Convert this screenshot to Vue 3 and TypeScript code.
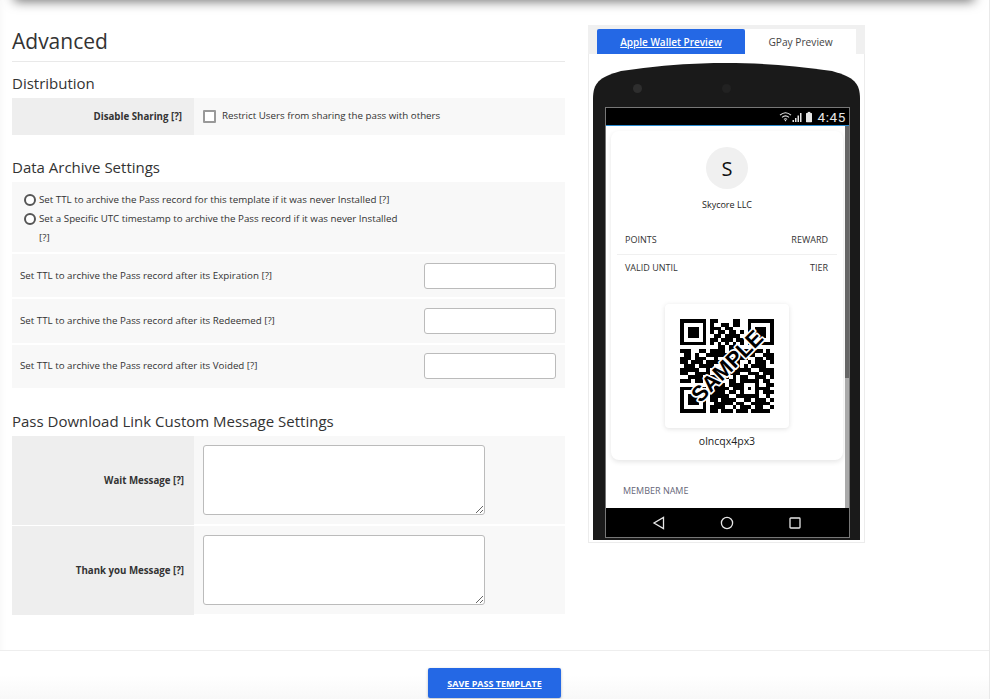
<script setup lang="ts">
import { computed } from 'vue'

const finderTop = ['1111111', '1000001', '1011101', '1011101', '1011101', '1000001', '1111111', '0000000']
const middle = ['01100001100', '01001101100', '01110110000', '01011011010', '00110111100', '01101110110', '01010101010', '00011011000']
const lower = [
  '1110011011110110011111010',
  '0110100111111001101100111',
  '1110111001001111110011011',
  '1101110111100111001011101',
  '0111011110011111010111100',
  '1111100100110011111001111',
  '1100111101001111001110111',
  '0011110011111010110011101',
  '1110110101100110111110110',
  '0000000011110111100010011',
  '1111111001111011101011110',
  '1000001011110110100010111',
  '1011101011111001111110010',
  '1011101011011110011011101',
  '1011101001111101100111110',
  '1000001011110010111011001',
  '1111111011011101110111110',
]
const rows = [...finderTop.map((f, i) => f + middle[i] + f), ...lower]

const qrPath = computed(() =>
  rows
    .flatMap((row, y) =>
      [...row].map((cell, x) => (cell === '1' ? `M${x} ${y}h1v1h-1z` : '')),
    )
    .join(''),
)

const archiveRows = [
  'Set TTL to archive the Pass record after its Expiration [?]',
  'Set TTL to archive the Pass record after its Redeemed [?]',
  'Set TTL to archive the Pass record after its Voided [?]',
]
const messageRows = ['Wait Message [?]', 'Thank you Message [?]']
</script>

<template>
  <div class="page">
    <div class="top-shadow"></div>
    <div class="content">
      <main class="left">
        <h1>Advanced</h1>

        <h2 class="h-dist">Distribution</h2>
        <div class="row share">
          <div class="label">Disable Sharing [?]</div>
          <div class="value share-value">
            <input class="check" type="checkbox" />
            <span class="share-text">Restrict Users from sharing the pass with others</span>
          </div>
        </div>

        <h2 class="h-data">Data Archive Settings</h2>
        <div class="radios">
          <label class="radio-line">
            <input class="radio" type="radio" name="ttl" />
            <span>Set TTL to archive the Pass record for this template if it was never Installed [?]</span>
          </label>
          <label class="radio-line">
            <input class="radio" type="radio" name="ttl" />
            <span>Set a Specific UTC timestamp to archive the Pass record if it was never Installed<br />[?]</span>
          </label>
        </div>
        <div class="archive-list">
          <div v-for="text in archiveRows" :key="text" class="archive-row">
            <span class="archive-text">{{ text }}</span>
            <input class="text-input" type="text" />
          </div>
        </div>

        <h2 class="h-pass">Pass Download Link Custom Message Settings</h2>
        <div class="message-list">
          <div v-for="text in messageRows" :key="text" class="row message">
            <div class="label">{{ text }}</div>
            <div class="value message-value">
              <textarea class="area"></textarea>
            </div>
          </div>
        </div>
      </main>

      <aside class="right">
        <div class="tabs">
          <a class="tab active">Apple Wallet Preview</a>
          <a class="tab">GPay Preview</a>
        </div>
        <div class="panel">
          <div class="phone">
            <div class="lens"></div>
            <div class="sensor"></div>
            <div class="screen">
              <div class="status">
                <svg class="status-icons" width="36" height="12" viewBox="0 0 36 12">
                  <g fill="none" stroke="#e6e6e6" stroke-width="1.1">
                    <path d="M1 4.2C4.6 1 8.4 1 12 4.2" />
                    <path d="M3 6.4C5.2 4.4 7.8 4.4 10 6.4" />
                    <path d="M4.9 8.4C5.9 7.6 7.1 7.6 8.1 8.4" />
                  </g>
                  <path d="M5.6 9.6L6.5 8.8L7.4 9.6L6.5 10.6Z" fill="#e6e6e6" />
                  <g fill="#e6e6e6">
                    <rect x="13.5" y="9" width="1.5" height="2" />
                    <rect x="16" y="7" width="1.5" height="4" />
                    <rect x="18.5" y="4.5" width="1.5" height="6.5" />
                    <rect x="21" y="2" width="1.5" height="9" />
                    <rect x="27" y="2" width="6" height="9.2" rx="0.6" />
                    <rect x="28.7" y="0.9" width="2.6" height="1.3" />
                  </g>
                </svg>
                <span class="clock">4:45</span>
              </div>
              <div class="scroll">
                <div class="scrollbar"></div>
                <div class="card">
                  <div class="avatar">S</div>
                  <div class="company">Skycore LLC</div>
                  <div class="field-row first">
                    <span>POINTS</span><span>REWARD</span>
                  </div>
                  <div class="field-row second">
                    <span>VALID UNTIL</span><span>TIER</span>
                  </div>
                  <div class="qr-card">
                    <svg class="qr" width="94" height="94" viewBox="0 0 25 25">
                      <path :d="qrPath" fill="#000" shape-rendering="crispEdges" />
                      <text
                        class="sample sample-halo"
                        x="12.5"
                        y="12.5"
                        text-anchor="middle"
                        dominant-baseline="central"
                        transform="rotate(-45 12.5 12.5)"
                      >SAMPLE</text>
                      <text
                        class="sample"
                        x="12.5"
                        y="12.5"
                        text-anchor="middle"
                        dominant-baseline="central"
                        transform="rotate(-45 12.5 12.5)"
                        aria-hidden="true"
                      >SAMPLE</text>
                    </svg>
                  </div>
                  <div class="code">olncqx4px3</div>
                </div>
                <div class="member">MEMBER NAME</div>
              </div>
              <div class="nav">
                <svg width="14" height="14" viewBox="0 0 14 14">
                  <path d="M11.5 1.5V12.5L2 7Z" fill="none" stroke="#e6e6e6" stroke-width="1.3" />
                </svg>
                <svg width="14" height="14" viewBox="0 0 14 14">
                  <circle cx="7" cy="7" r="5.6" fill="none" stroke="#e6e6e6" stroke-width="1.3" />
                </svg>
                <svg width="14" height="14" viewBox="0 0 14 14">
                  <rect x="2" y="2" width="10" height="10" rx="0.8" fill="none" stroke="#e6e6e6" stroke-width="1.3" />
                </svg>
              </div>
            </div>
          </div>
        </div>
      </aside>
    </div>

    <footer class="footer">
      <a class="save">SAVE PASS TEMPLATE</a>
    </footer>
  </div>
</template>

<style>
html,
body {
  margin: 0;
  background: #fff;
}
</style>

<style scoped>
* {
  box-sizing: border-box;
}
.page {
  position: relative;
  width: 990px;
  height: 699px;
  overflow: hidden;
  background: #fff;
  color: #333;
  font-family: 'Open Sans', 'Liberation Sans', sans-serif;
  font-size: 9.75px;
  border-right: 1px solid #e9e9e9;
  box-shadow: inset 8px 0 8px -8px rgba(0, 0, 0, 0.05);
}
.top-shadow {
  position: absolute;
  top: -12px;
  left: 14px;
  right: 15px;
  height: 12px;
  box-shadow: 0 1px 12px rgba(0, 0, 0, 0.6);
}
.content {
  display: flex;
  align-items: flex-start;
  gap: 23px;
  height: 650px;
  padding: 0 12px;
}
.left {
  width: 553px;
  flex: none;
}
h1 {
  margin: 26px 0 0;
  padding-bottom: 5px;
  height: 36px;
  line-height: 30px;
  font-size: 21px;
  font-weight: 400;
  border-bottom: 1px solid #e9e9e9;
}
h2 {
  margin: 0 0 4px;
  height: 22px;
  line-height: 22px;
  font-size: 15px;
  font-weight: 400;
}
.h-dist {
  margin-top: 10px;
}
.h-data {
  margin-top: 21px;
}
.h-pass {
  margin-top: 22px;
}
.row {
  display: flex;
  align-items: stretch;
}
.label {
  width: 182px;
  flex: none;
  display: flex;
  align-items: center;
  justify-content: flex-end;
  padding-right: 12px;
  background: #eee;
  font-weight: 700;
  font-size: 9.7px;
}
.value {
  flex: 1;
  background: #f8f8f8;
}
.share {
  height: 37px;
}
.share-value {
  display: flex;
  align-items: center;
  gap: 6px;
  padding-left: 9px;
  padding-bottom: 2px;
}
.share-text {
  margin-bottom: 1px;
}
.check {
  appearance: none;
  margin: 2px 0 0;
  width: 13px;
  height: 13px;
  background: #fff;
  border: 2px solid #999;
  border-radius: 1px;
}
.radios {
  height: 70px;
  padding: 8px 12px 0;
  background: #f8f8f8;
  line-height: 19px;
}
.radio-line {
  display: flex;
  align-items: flex-start;
  gap: 3px;
}
.radio {
  appearance: none;
  flex: none;
  margin: 4px 0 0;
  width: 12px;
  height: 12px;
  border: 2px solid #555;
  border-radius: 50%;
  background: #fff;
}
.archive-list {
  display: flex;
  flex-direction: column;
  gap: 2px;
  margin-top: 2px;
}
.archive-row {
  height: 43.33px;
  display: flex;
  align-items: center;
  justify-content: space-between;
  padding: 0 9px 0 8px;
  background: #f8f8f8;
}
.archive-text {
  margin-bottom: 1px;
}
.text-input {
  width: 132px;
  height: 26px;
  background: #fff;
  border: 1px solid #bbb;
  border-radius: 3px;
}
.message-list {
  display: flex;
  flex-direction: column;
  gap: 1px;
}
.message {
  height: 89px;
}
.message .label {
  padding-right: 10px;
}
.message-value {
  margin-bottom: 1px;
  padding: 9px;
}
.area {
  display: block;
  width: 282px;
  height: 70px;
  background: #fff;
  border: 1px solid #bbb;
  border-radius: 3px;
}
.right {
  width: 277px;
  flex: none;
  margin-top: 25px;
}
.tabs {
  display: flex;
  height: 29px;
  padding: 4px 9px 0;
  background: #f0f0f0;
}
.tab {
  height: 25px;
  display: flex;
  align-items: center;
  justify-content: center;
  font-size: 10.2px;
  font-weight: 400;
  background: #fff;
  color: #444;
  width: 111px;
}
.tab.active {
  width: 148px;
  background: #2468e5;
  color: #fff;
  font-size: 10px;
  font-weight: 600;
  text-decoration: underline;
  border-radius: 2px 2px 0 0;
}
.panel {
  height: 489px;
  padding: 9px 4px 0;
  background: #fff;
  border: 1px solid #ececec;
  border-top: 0;
}
.phone {
  position: relative;
  width: 267px;
  height: 477px;
  padding: 44px 10px 0 12px;
  background: #1a1a1a;
  clip-path: path('M0 477V36C0 20 6 14 28 8C70 2 100 0 133 0C166 0 197 2 239 8C261 14 267 20 267 36V477Z');
}
.lens {
  position: absolute;
  left: 40px;
  top: 21px;
  width: 9px;
  height: 9px;
  border-radius: 50%;
  background: #2e2e2e;
}
.sensor {
  position: absolute;
  left: 129px;
  top: 21px;
  width: 9px;
  height: 9px;
  border-radius: 50%;
  background: #222;
}
.screen {
  width: 245px;
  height: 431px;
  border: 1px solid #777;
  display: flex;
  flex-direction: column;
}
.status {
  height: 18px;
  flex: none;
  display: flex;
  align-items: center;
  justify-content: flex-end;
  gap: 3px;
  padding-right: 3px;
  background: #000;
  border-bottom: 1px solid #2a8bd0;
}
.clock {
  font-family: Roboto, 'Open Sans', sans-serif;
  font-size: 13.5px;
  line-height: 16px;
  letter-spacing: 0.6px;
  color: #e6e6e6;
}
.scroll {
  position: relative;
  flex: 1;
  padding: 5px 5px 0;
  background: #fff;
  overflow: hidden;
}
.scrollbar {
  position: absolute;
  top: 0;
  right: 0;
  bottom: 0;
  width: 4px;
  background: linear-gradient(#666 0, #666 252px, #aaa 252px);
}
.card {
  width: 232px;
  height: 329px;
  padding-top: 16px;
  background: #fff;
  border-radius: 8px;
  box-shadow: 0 2px 5px rgba(0, 0, 0, 0.1);
  font-size: 9px;
}
.avatar {
  width: 42px;
  height: 42px;
  margin: 0 auto;
  display: flex;
  align-items: center;
  justify-content: center;
  border-radius: 50%;
  background: #f0f0f0;
  color: #111;
  font-size: 20px;
}
.company {
  margin-top: 9px;
  height: 14px;
  line-height: 14px;
  text-align: center;
  color: #222;
}
.field-row {
  display: flex;
  justify-content: space-between;
  color: #333;
  line-height: 14px;
}
.field-row.first {
  margin: 21px 6px 0;
  padding: 0 9px 7px 8px;
  border-bottom: 1px solid #f0f0f0;
}
.field-row.second {
  margin: 6px 15px 0 14px;
}
.qr-card {
  width: 124px;
  height: 124px;
  margin: 29px auto 0;
  padding: 15px;
  border-radius: 4px;
  background: #fff;
  box-shadow: 0 1px 5px rgba(0, 0, 0, 0.12);
}
.qr {
  display: block;
}
.sample {
  font-family: 'Liberation Sans', sans-serif;
  font-size: 5.8px;
  font-weight: 700;
  fill: #000;
}
.sample-halo {
  fill: #fff;
  stroke: #fff;
  stroke-width: 0.9px;
  stroke-linejoin: round;
}
.code {
  margin-top: 6px;
  height: 14px;
  line-height: 14px;
  font-size: 10.5px;
  text-align: center;
  color: #222;
}
.member {
  margin: 24px 0 0 12px;
  line-height: 14px;
  font-size: 9px;
  color: #667;
}
.nav {
  height: 29px;
  flex: none;
  display: flex;
  align-items: center;
  justify-content: center;
  gap: 54px;
  padding-right: 1px;
  background: #000;
}
.footer {
  height: 49px;
  padding-top: 17px;
  display: flex;
  justify-content: center;
  border-top: 1px solid #eee;
  background: linear-gradient(#fff 50%, #f8f8f8);
}
.save {
  width: 133px;
  height: 30px;
  display: flex;
  align-items: center;
  justify-content: center;
  background: #2468e5;
  color: #fff;
  font-size: 9px;
  font-weight: 700;
  text-decoration: underline;
  border-radius: 2px;
  box-shadow: 0 1px 3px rgba(0, 0, 0, 0.25);
}
</style>
